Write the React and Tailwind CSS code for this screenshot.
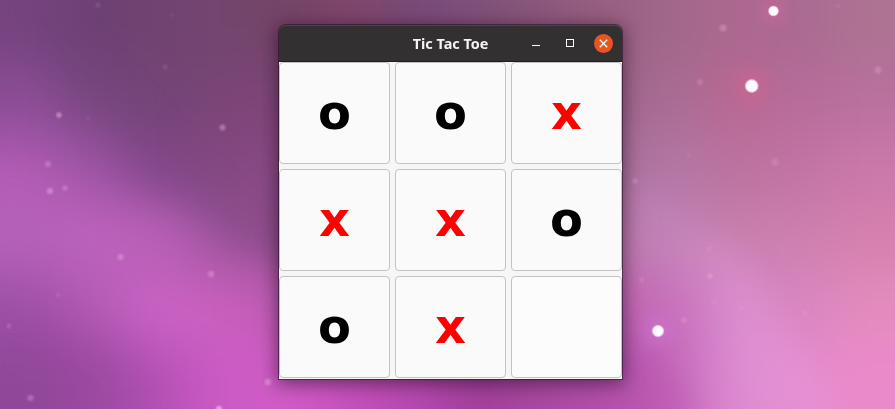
const PATCH_W = 64;
const PATCH_H = 68;

// Colour patches of the nebula, row by row; the blur melts them together.
const NEBULA = [
  ['#774480', '#6d4074', '#714370', '#73456f', '#744466', '#80466c', '#784a78', '#80507a', '#8b587c', '#986082', '#a1688a', '#ad6890', '#aa6a92', '#ae7292'],
  ['#8c4d96', '#7b477f', '#744478', '#7b4577', '#80467a', '#80467a', '#80507a', '#80507a', '#8b587c', '#a0658c', '#a96c94', '#b96893', '#b66c9a', '#ba709e'],
  ['#b05bb5', '#9d54a4', '#86488a', '#834881', '#8c4a86', '#8c4a86', '#905088', '#905088', '#9a5890', '#a97099', '#b377a7', '#bb729f', '#c274a4', '#cb78ab'],
  ['#b662ba', '#be63c0', '#b75fb7', '#9a5297', '#8c4b88', '#8c4b88', '#905088', '#905088', '#a560a0', '#b877aa', '#c484b6', '#c880ae', '#cd80b0', '#d680ae'],
  ['#9f51a9', '#b65ab6', '#cb64c5', '#cb60bf', '#bd5ab0', '#a9509f', '#a04898', '#a04898', '#aa559f', '#bb62ab', '#ca70be', '#d587c7', '#d985c0', '#e38bbe'],
  ['#91489b', '#9e4aa3', '#b752b7', '#cd5bc5', '#d05cc6', '#c450ba', '#b548ae', '#a13f9a', '#a949a0', '#b34fab', '#c467b9', '#df8bd2', '#e58acd', '#eb8aca'],
];

const STARS = [
  [98, 5, 3, 0.14], [172, 15, 2.5, 0.08], [165, 67, 3, 0.13], [59, 115, 3.2, 0.5],
  [88, 118, 3, 0.08], [222.5, 127.5, 3.5, 0.42], [48, 164, 3.5, 0.32], [50, 191, 3.7, 0.42],
  [65, 188, 3.2, 0.3], [120.5, 257, 3.7, 0.36], [211, 274, 3.7, 0.36], [58, 295, 2.7, 0.12],
  [9, 326, 3, 0.2], [30.5, 398, 3.7, 0.32], [268, 382, 3.8, 0.44], [219, 409, 3.5, 0.8],
  [723, 28, 4, 0.34], [700, 82, 3.3, 0.24], [838, 6, 3, 0.1], [878, 70, 4, 0.28],
  [775, 162, 4.5, 0.2], [635, 181, 3.5, 0.24], [689, 155, 3, 0.08], [710, 276, 3.2, 0.26],
  [642, 280, 3, 0.16], [714, 302, 4, 0.1], [684, 320, 3.5, 0.22], [709, 249, 3, 0.12],
  [741, 308, 3, 0.12], [805, 313, 3, 0.15],
];

const BRIGHT_STARS = [
  [773.5, 11, 5.6, '#d868a0'],
  [751.7, 86, 7.2, '#dc6292'],
  [658, 331, 6.4, '#d277dc'],
];

function Wallpaper() {
  return (
    <svg className="h-full w-full" viewBox="0 0 895 409" preserveAspectRatio="none" aria-hidden="true">
      <defs>
        <filter id="melt" x="-100" y="-100" width="1095" height="609" filterUnits="userSpaceOnUse" colorInterpolationFilters="sRGB">
          <feGaussianBlur stdDeviation="26" />
        </filter>
        <filter id="streak" x="-100" y="-100" width="1095" height="609" filterUnits="userSpaceOnUse" colorInterpolationFilters="sRGB">
          <feGaussianBlur stdDeviation="14" />
        </filter>
        <radialGradient id="glow">
          <stop offset="0" stopColor="#ffc4ee" />
          <stop offset="0.4" stopColor="#ffc4ee" stopOpacity="0.7" />
          <stop offset="1" stopColor="#ffc4ee" stopOpacity="0" />
        </radialGradient>
        <radialGradient id="core">
          <stop offset="0.72" stopColor="#fffaff" />
          <stop offset="1" stopColor="#ffeaff" stopOpacity="0.2" />
        </radialGradient>
        {BRIGHT_STARS.map(([, , , halo], i) => (
          <radialGradient id={`halo${i}`} key={i}>
            <stop offset="0" stopColor={halo} stopOpacity="0.45" />
            <stop offset="1" stopColor={halo} stopOpacity="0" />
          </radialGradient>
        ))}
      </defs>
      <g filter="url(#melt)">
        {NEBULA.map((row, r) =>
          row.map((color, c) => {
            const left = c === 0 ? -100 : c * PATCH_W;
            const right = c === row.length - 1 ? 995 : (c + 1) * PATCH_W;
            const top = r === 0 ? -100 : r * PATCH_H;
            const bottom = r === NEBULA.length - 1 ? 509 : (r + 1) * PATCH_H;
            return <rect key={`${r}-${c}`} x={left} y={top} width={right - left + 1} height={bottom - top + 1} fill={color} />;
          })
        )}
      </g>
      <g filter="url(#streak)">
        <path d="M10 0 L50 0 L190 160 L290 250 L240 250 L120 155Z" fill="#643e79" opacity="0.12" />
        <path d="M-20 150 L60 175 L180 215 L290 280 L290 320 L150 260 L-20 200Z" fill="#c466bd" opacity="0.14" />
        <path d="M-20 300 L80 330 L180 409 L-20 430Z" fill="#884398" opacity="0.12" />
        <path d="M690 230 L740 250 L850 420 L770 420Z" fill="#eaa2e6" opacity="0.24" />
        <path d="M625 180 L660 190 L790 420 L750 420Z" fill="#d898dc" opacity="0.14" />
        <path d="M610 350 L650 350 L705 420 L610 420Z" fill="#b34ca8" opacity="0.3" />
      </g>
      {STARS.map(([x, y, r, o]) => (
        <circle key={`${x}-${y}`} cx={x} cy={y} r={r * 1.3} fill="url(#glow)" opacity={o} />
      ))}
      {BRIGHT_STARS.map(([x, y, r], i) => (
        <g key={x}>
          <circle cx={x} cy={y} r={r * 3.8} fill={`url(#halo${i})`} />
          <circle cx={x} cy={y} r={r} fill="url(#core)" />
        </g>
      ))}
    </svg>
  );
}

function TitleBar() {
  return (
    <header className="grid h-[37px] grid-cols-[1fr_auto_1fr] items-center rounded-t-[7px] border-t border-b border-t-[#484646] border-b-[#1e1c1c] bg-[#323030]">
      <span />
      <h1 className="pt-[2px] font-['Noto_Sans','Open_Sans',sans-serif] text-[14.4px] leading-none font-bold text-[#f5f5f5]">
        Tic Tac Toe
      </h1>
      <div className="flex items-center justify-end gap-[15px] pr-[9px] pb-px">
        <button className="flex size-[19px] items-center justify-center" aria-label="Minimize">
          <svg width="19" height="19" shapeRendering="crispEdges"><rect x="6" y="11" width="8" height="1" fill="#fff" /></svg>
        </button>
        <button className="flex size-[19px] items-center justify-center" aria-label="Maximize">
          <svg width="19" height="19" shapeRendering="crispEdges"><rect x="6.5" y="5.5" width="7" height="7" fill="none" stroke="#fff" strokeWidth="1" /></svg>
        </button>
        <button className="flex size-[19px] items-center justify-center rounded-full bg-[#e95420]" aria-label="Close">
          <svg width="19" height="19"><path d="M5.8 5.8 L13.2 13.2 M13.2 5.8 L5.8 13.2" stroke="#fff" strokeWidth="1.3" /></svg>
        </button>
      </div>
    </header>
  );
}

const BOARD = ['o', 'o', 'x', 'x', 'x', 'o', 'o', 'x', ''];

export default function App() {
  return (
    <main className="relative h-[409px] w-[895px] overflow-hidden bg-[#915090]">
      <div className="absolute inset-0">
        <Wallpaper />
      </div>
      <section className="absolute top-[25px] left-[279px] w-[343px] rounded-t-[7px] shadow-[0_0_0_1px_rgba(25,10,25,0.5),0_3px_18px_2px_rgba(20,0,20,0.5)]">
        <TitleBar />
        <div className="grid grid-cols-3 gap-[5px] bg-[#f6f6f6] pb-px">
          {BOARD.map((mark, i) => (
            <button
              key={i}
              className={`flex h-[102px] items-center justify-center rounded-[4px] border border-[#c3c3c3] pb-[3px] font-['DejaVu_Sans',sans-serif] text-[48px] leading-none font-bold ${mark ? 'bg-[#fafafa]' : 'bg-[#fcfcfc]'} ${mark === 'x' ? 'text-[#ff0000]' : 'text-black'}`}
            >
              {mark}
            </button>
          ))}
        </div>
      </section>
    </main>
  );
}
